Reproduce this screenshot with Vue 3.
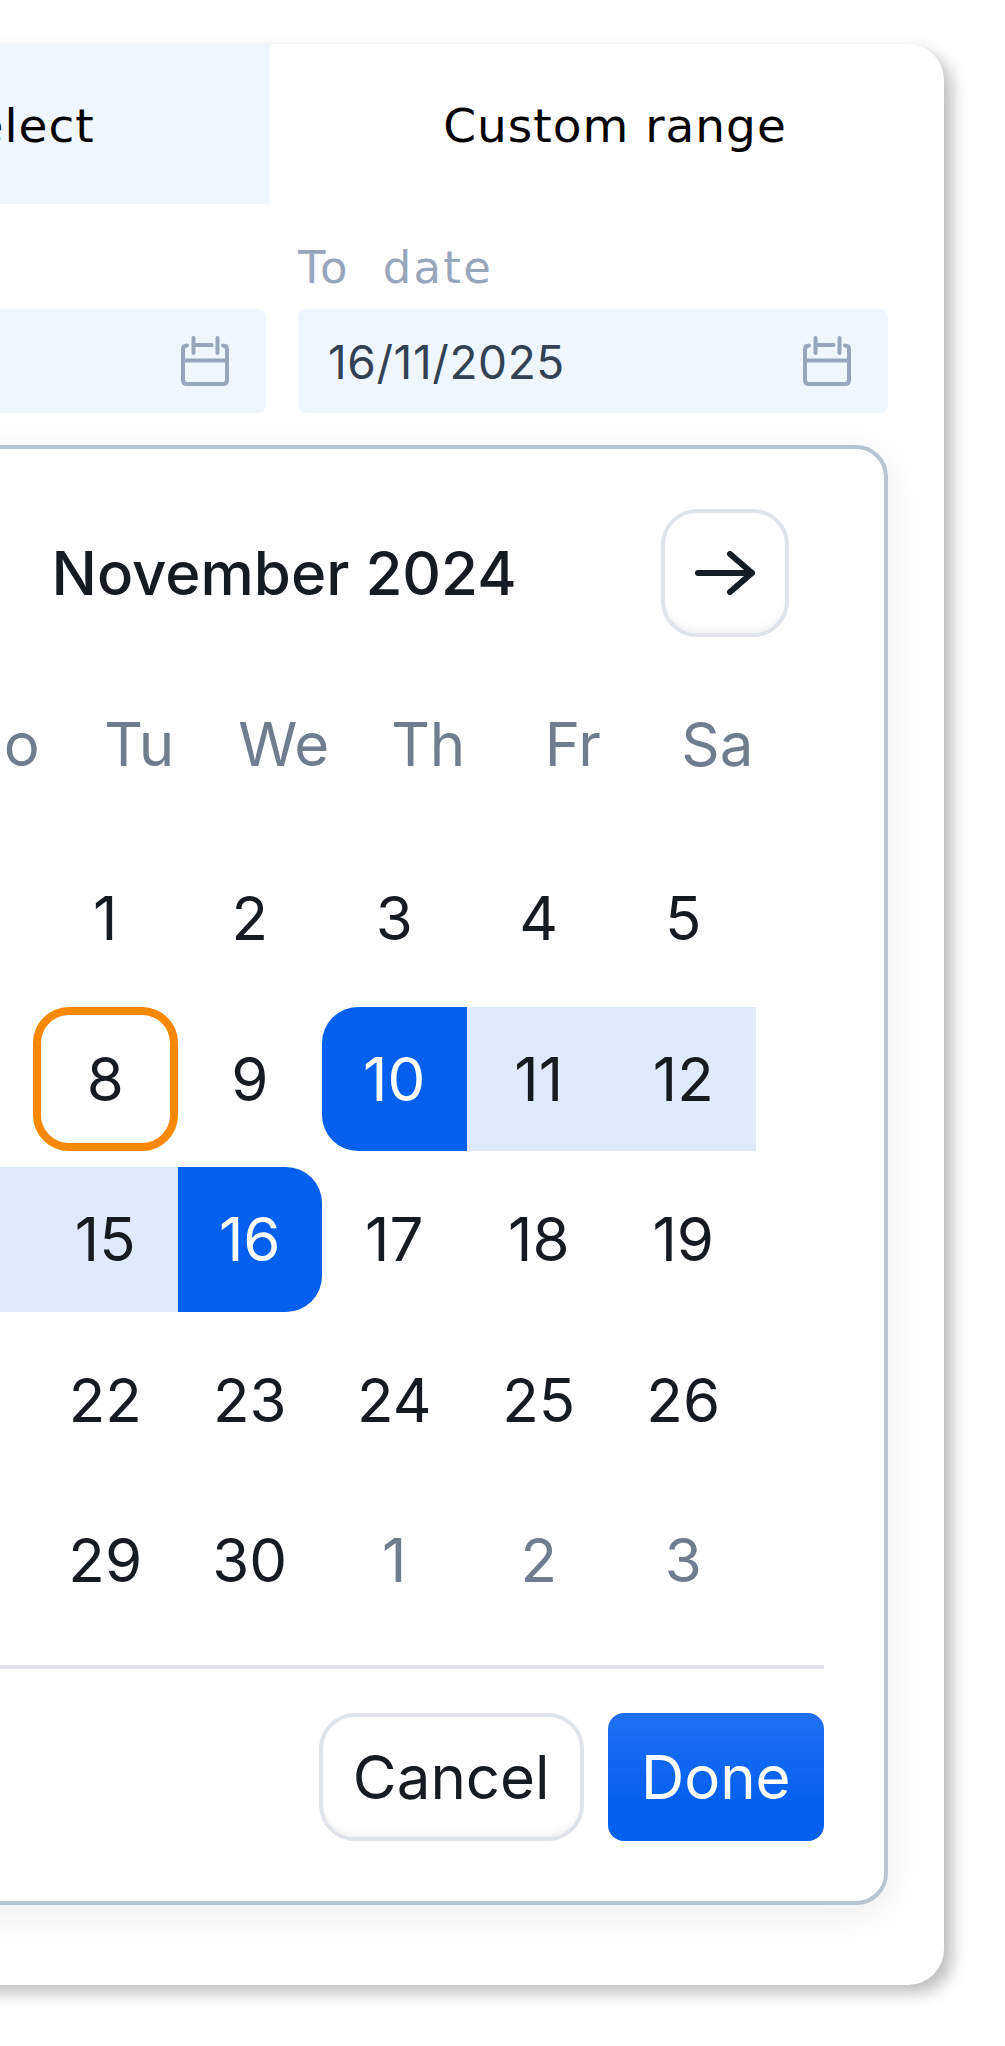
<script setup>
const weekdays = ['Su', 'Mo', 'Tu', 'We', 'Th', 'Fr', 'Sa']
const days = [
  [30, 'muted'], [31, 'muted'], [1], [2], [3], [4], [5],
  [6], [7], [8, 'today'], [9], [10, 'start'], [11, 'mid'], [12, 'mid'],
  [13, 'mid'], [14, 'mid'], [15, 'mid'], [16, 'end'], [17], [18], [19],
  [20], [21], [22], [23], [24], [25], [26],
  [27], [28], [29], [30], [1, 'muted'], [2, 'muted'], [3, 'muted']
]
const fields = [
  { label: 'From  date', value: '10/11/2025' },
  { label: 'To  date', value: '16/11/2025' }
]
</script>

<template>
  <div class="page">
    <div class="card">
      <div class="tabs">
        <div class="tab tab-off">Quick select</div>
        <div class="tab tab-on">Custom range</div>
      </div>
      <div class="body">
        <div class="fields">
          <div v-for="f in fields" :key="f.label" class="field">
            <div class="label">{{ f.label }}</div>
            <div class="input">
              <span class="value">{{ f.value }}</span>
              <svg class="cal-icon" viewBox="0 0 48 50" fill="none" stroke="#97a6bc" stroke-width="4" stroke-linecap="round" stroke-linejoin="round">
                <path d="M6 9.500C3.500 9.500 2 11 2 13.500V44c0 2.500 1.500 4 4 4h36c2.500 0 4-1.500 4-4V13.500c0-2.500-1.500-4-4-4" />
                <path d="M2 24.500h44" />
                <path d="M12.500 2v15M36.500 2v15M12.500 9h18" />
              </svg>
            </div>
          </div>
        </div>
        <div class="calendar">
          <div class="head">
            <button class="nav">
              <svg class="arrow" viewBox="0 0 60 44" fill="none" stroke="#161c24" stroke-width="6" stroke-linecap="round" stroke-linejoin="round"><path d="M57 22H3M25 3 3 22l22 19" /></svg>
            </button>
            <div class="month">November 2024</div>
            <button class="nav">
              <svg class="arrow" viewBox="0 0 60 44" fill="none" stroke="#161c24" stroke-width="6" stroke-linecap="round" stroke-linejoin="round"><path d="M3 22h54M35 3l22 19-22 19" /></svg>
            </button>
          </div>
          <div class="weekdays">
            <div v-for="w in weekdays" :key="w" class="weekday">{{ w }}</div>
          </div>
          <div class="days">
            <div v-for="(d, i) in days" :key="i" class="day" :class="d[1]">{{ d[0] }}</div>
          </div>
          <div class="divider"></div>
          <div class="actions">
            <button class="btn cancel">Cancel</button>
            <button class="btn done">Done</button>
          </div>
        </div>
      </div>
    </div>
  </div>
</template>

<style>
html, body { margin: 0; background: #fff; }
</style>

<style scoped>
.page {
  width: 1005px;
  height: 2046px;
  overflow: hidden;
  background: #fff;
  padding-top: 44px;
  box-sizing: border-box;
  font-family: "Inter", "Liberation Sans", sans-serif;
  color: #161b22;
}
.card {
  width: 1324px;
  margin-left: -380px;
  background: #fff;
  border-radius: 36px;
  box-shadow: 8px 8px 16px rgba(0, 0, 0, 0.26);
  padding-bottom: 80px;
}
.tabs {
  display: grid;
  grid-template-columns: 650px 1fr;
  height: 160px;
}
.tab {
  display: flex;
  align-items: center;
  justify-content: center;
  padding-top: 2px;
  font-family: "DejaVu Sans", "Liberation Sans", sans-serif;
  font-size: 47px;
  letter-spacing: 1px;
  color: #000;
}
.tab-off { background: #eff6ff; }
.tab-on { padding-left: 16px; border-top-right-radius: 36px; }
.body { padding: 0 56px; }
.fields {
  display: grid;
  grid-template-columns: 590px 590px;
  gap: 32px;
  padding-top: 36px;
}
.label {
  height: 56px;
  line-height: 56px;
  margin-bottom: 13px;
  font-family: "DejaVu Sans", "Liberation Sans", sans-serif;
  font-size: 45px;
  letter-spacing: 2.200px;
  color: #98a6bb;
  white-space: pre;
}
.input {
  height: 104px;
  border-radius: 8px;
  background: #eff6ff;
  display: flex;
  align-items: center;
  justify-content: space-between;
  padding: 0 37px 0 30px;
}
.value {
  padding-top: 2px;
  font-family: "Inter", "Liberation Sans", sans-serif;
  font-size: 46px;
  letter-spacing: 0.6px;
  color: #334155;
}
.cal-icon { width: 48px; height: 50px; flex: none; }
.calendar {
  margin-top: 32px;
  border: 4px solid #b8c4d0;
  border-radius: 32px;
  padding: 60px;
  background: #fff;
  box-shadow: 0 8px 40px rgba(0, 0, 0, 0.08);
}
.head {
  height: 128px;
  margin: 0 35px 35px 39px;
  display: flex;
  align-items: center;
  justify-content: space-between;
}
.month {
  font-size: 60px;
  font-weight: 450;
  line-height: 1;
}
.nav {
  width: 128px;
  height: 128px;
  box-sizing: border-box;
  border: 4px solid #dfe3ea;
  border-radius: 36px;
  background: #fff;
  box-shadow: inset 0 -8px 8px -6px rgba(0, 0, 0, 0.08);
  display: flex;
  align-items: center;
  justify-content: center;
  padding: 0;
}
.arrow { width: 60px; height: 44px; }
.weekdays {
  display: grid;
  grid-template-columns: repeat(7, 144.500px);
  margin: 0 35px 30px 38px;
}
.weekday {
  height: 144px;
  line-height: 144px;
  text-align: center;
  font-size: 60px;
  color: #6f7d8e;
}
.days {
  display: grid;
  grid-template-columns: repeat(7, 144.500px);
  grid-auto-rows: 144.500px;
  row-gap: 16px;
  margin-left: 4px;
}
.day {
  display: flex;
  align-items: center;
  justify-content: center;
  box-sizing: border-box;
  font-size: 60px;
  font-weight: 435;
  color: #161b22;
}
.muted { color: #6f7d8e; }
.today { border: 8px solid #f78800; border-radius: 36px; }
.start, .end { background: #0360f0; color: #fff; }
.start { border-radius: 36px 0 0 36px; }
.end { border-radius: 0 36px 36px 0; }
.mid { background: #dfebfd; }
.divider {
  height: 4px;
  background: #dde1e7;
  margin-top: 32px;
}
.actions {
  display: flex;
  justify-content: flex-end;
  gap: 24px;
  margin-top: 44px;
}
.btn {
  height: 128px;
  box-sizing: border-box;
  font-family: "Inter", "Liberation Sans", sans-serif;
  font-size: 60px;
  font-weight: 435;
  padding: 0;
}
.cancel {
  width: 264.500px;
  border: 4px solid #dfe3ea;
  border-radius: 36px;
  background: #fff;
  color: #161b22;
  box-shadow: inset 0 -8px 8px -6px rgba(0, 0, 0, 0.08);
}
.done {
  width: 216.500px;
  border: 0;
  border-radius: 16px;
  background: linear-gradient(180deg, #2070f3 0%, #0360f0 70%);
  color: #fff;
}
</style>
